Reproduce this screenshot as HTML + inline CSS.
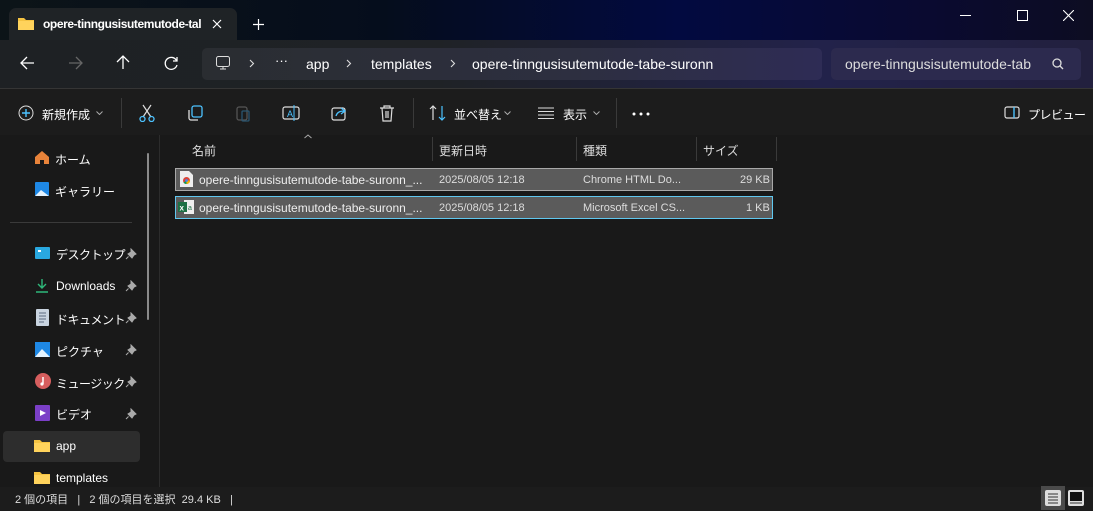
<!DOCTYPE html>
<html><head><meta charset="utf-8"><style>
*{margin:0;padding:0;box-sizing:border-box}
body{width:1093px;height:511px;overflow:hidden;background:#191919;font-family:"Liberation Sans","Noto Sans CJK JP",sans-serif;color:#fff;position:relative;font-size:12px}
.abs{position:absolute}
.title{left:0;top:0;width:1093px;height:40px;background:linear-gradient(90deg,#0c1418 0%,#050d1c 35%,#020a40 62%,#0a0a30 85%,#0d0d22 100%)}
.tab{left:9px;top:8px;width:228px;height:32px;background:#1f2326;border-radius:7px 7px 0 0}
.nav{left:0;top:40px;width:1093px;height:48px;background:linear-gradient(90deg,#1e2124 0%,#1f2226 40%,#22224a 75%,#22203e 100%)}
.addr{left:202px;top:48px;width:620px;height:32px;border-radius:5px;background:linear-gradient(90deg,#2a2d31,#2d2f40 60%,#2e2c55)}
.search{left:831px;top:48px;width:250px;height:32px;border-radius:5px;background:#2c2a4e}
.tool{left:0;top:88px;width:1093px;height:47px;background:#1c1c1c;border-top:1px solid #353535}
.t{position:absolute;white-space:nowrap}
.sep{position:absolute;width:1px;background:#3a3a3a}
.row{position:absolute;left:175px;width:598px;height:23px;background:#5b5b5b}
.side{font-size:12px;color:#fff}
.status{left:0;top:487px;width:1093px;height:24px;background:#1c1c1c}
</style></head><body>
<div class="abs title"></div>
<div class="abs tab"></div>
<svg class="abs" style="left:18px;top:17px" width="16" height="13"><path d="M0 1h6l2 2h8v10H0z" fill="#f5c342"/><rect x="0" y="4" width="16" height="9" fill="#ffd35c"/></svg>
<div class="t" style="left:43px;top:17px;font-size:12px;font-weight:bold;letter-spacing:-0.4px">opere-tinngusisutemutode-tal</div>
<svg class="abs" style="left:212px;top:19px" width="10" height="10"><path d="M1 1l8 8M9 1L1 9" stroke="#fff" stroke-width="1.2"/></svg>
<svg class="abs" style="left:253px;top:19px" width="11" height="11"><path d="M5.5 0v11M0 5.5h11" stroke="#fff" stroke-width="1.2"/></svg>
<div class="abs" style="left:960px;top:15px;width:11px;height:1px;background:#fff"></div>
<div class="abs" style="left:1017px;top:10px;width:11px;height:11px;border:1px solid #fff"></div>
<svg class="abs" style="left:1063px;top:10px" width="11" height="11"><path d="M0 0l11 11M11 0L0 11" stroke="#fff" stroke-width="1.1"/></svg>
<div class="abs nav"></div>
<svg class="abs" style="left:20px;top:56px" width="15" height="14"><path d="M14 7H1M7 1L1 7l6 6" fill="none" stroke="#fff" stroke-width="1.3"/></svg>
<svg class="abs" style="left:68px;top:56px" width="15" height="14"><path d="M1 7h13M8 1l6 6-6 6" fill="none" stroke="#666" stroke-width="1.3"/></svg>
<svg class="abs" style="left:116px;top:55px" width="14" height="15"><path d="M7 14V1M1 7l6-6 6 6" fill="none" stroke="#fff" stroke-width="1.3"/></svg>
<svg class="abs" style="left:164px;top:56px" width="15" height="15"><path d="M12.5 4.5A6 6 0 1 0 13 9" fill="none" stroke="#fff" stroke-width="1.3"/><path d="M13 1v4h-4" fill="none" stroke="#fff" stroke-width="1.3"/></svg>
<div class="abs addr"></div>
<svg class="abs" style="left:215px;top:55px" width="16" height="16"><rect x="1.5" y="1.5" width="13" height="10" rx="2" fill="none" stroke="#ddd"/><path d="M5 14h6M8 12v2" stroke="#ddd"/></svg>
<svg class="abs" style="left:249px;top:59px" width="6" height="9"><path d="M1 1l3.5 3.5L1 8" fill="none" stroke="#ddd" stroke-width="1.1"/></svg>
<div class="t" style="left:275px;top:53px;font-size:13px">···</div>
<div class="t" style="left:306px;top:56px;font-size:14px">app</div>
<svg class="abs" style="left:346px;top:59px" width="6" height="9"><path d="M1 1l3.5 3.5L1 8" fill="none" stroke="#ddd" stroke-width="1.1"/></svg>
<div class="t" style="left:371px;top:56px;font-size:14px">templates</div>
<svg class="abs" style="left:450px;top:59px" width="6" height="9"><path d="M1 1l3.5 3.5L1 8" fill="none" stroke="#ddd" stroke-width="1.1"/></svg>
<div class="t" style="left:472px;top:56px;font-size:14px">opere-tinngusisutemutode-tabe-suronn</div>
<div class="abs search"></div>
<div class="t" style="left:845px;top:56px;font-size:14px;color:#ddd">opere-tinngusisutemutode-tab</div>
<svg class="abs" style="left:1052px;top:58px" width="12" height="12"><circle cx="5" cy="5" r="4" fill="none" stroke="#ddd" stroke-width="1.3"/><path d="M8 8l3 3" stroke="#ddd" stroke-width="1.3"/></svg>
<div class="abs tool"></div>
<svg class="abs" style="left:18px;top:105px" width="16" height="16"><circle cx="8" cy="8" r="7" fill="none" stroke="#ddd"/><path d="M8 4v8M4 8h8" stroke="#4cc2ff" stroke-width="1.4"/></svg>
<div class="t" style="left:42px;top:106px;font-size:12px">新規作成</div>
<svg class="abs" style="left:96px;top:111px" width="7" height="4"><path d="M0.5 0.5l3 3 3-3" fill="none" stroke="#aaa"/></svg>
<div class="sep" style="left:121px;top:98px;height:30px"></div>
<svg class="abs" style="left:138px;top:104px" width="18" height="18"><path d="M5 1l8 12M13 1L5 13" stroke="#ddd" stroke-width="1.2"/><circle cx="4.5" cy="15" r="2.5" fill="none" stroke="#4cc2ff" stroke-width="1.3"/><circle cx="13.5" cy="15" r="2.5" fill="none" stroke="#4cc2ff" stroke-width="1.3"/></svg>
<svg class="abs" style="left:186px;top:104px" width="18" height="18"><rect x="6" y="2" width="10" height="11" rx="2" fill="none" stroke="#4cc2ff" stroke-width="1.3"/><path d="M3 6v8a2 2 0 002 2h7" fill="none" stroke="#ddd" stroke-width="1.3"/></svg>
<svg class="abs" style="left:234px;top:104px" width="18" height="18"><rect x="3" y="3" width="10" height="13" rx="2" fill="none" stroke="#555" stroke-width="1.3"/><rect x="8" y="7" width="7" height="10" rx="1" fill="none" stroke="#2a5570" stroke-width="1.3"/></svg>
<svg class="abs" style="left:282px;top:104px" width="18" height="18"><rect x="1" y="3" width="16" height="12" rx="2" fill="none" stroke="#ddd" stroke-width="1.2"/><text x="5" y="13" font-size="9" fill="#4cc2ff" font-family="Liberation Sans">A</text><path d="M12 1v16" stroke="#4cc2ff"/></svg>
<svg class="abs" style="left:330px;top:104px" width="18" height="18"><rect x="2" y="4" width="13" height="12" rx="2" fill="none" stroke="#ddd" stroke-width="1.2"/><path d="M6 12c1-4 4-5 8-5M11 4l4 3-4 3" fill="none" stroke="#4cc2ff" stroke-width="1.3"/></svg>
<svg class="abs" style="left:378px;top:104px" width="18" height="18"><path d="M2 4h14M6 4V2h6v2M4 4l1 13h8l1-13M8 7v7M10 7v7" fill="none" stroke="#ddd" stroke-width="1.2"/></svg>
<div class="sep" style="left:413px;top:98px;height:30px"></div>
<svg class="abs" style="left:429px;top:105px" width="18" height="16"><path d="M4 15V1M1 4l3-3 3 3" fill="none" stroke="#ddd" stroke-width="1.2"/><path d="M13 1v14M10 12l3 3 3-3" fill="none" stroke="#4cc2ff" stroke-width="1.2"/></svg>
<div class="t" style="left:454px;top:106px;font-size:12px">並べ替え</div>
<svg class="abs" style="left:504px;top:111px" width="7" height="4"><path d="M0.5 0.5l3 3 3-3" fill="none" stroke="#aaa"/></svg>
<svg class="abs" style="left:538px;top:107px" width="16" height="12"><path d="M0 1h16M0 4.5h16M0 8h16M0 11.5h16" stroke="#ddd"/></svg>
<div class="t" style="left:563px;top:106px;font-size:12px">表示</div>
<svg class="abs" style="left:593px;top:111px" width="7" height="4"><path d="M0.5 0.5l3 3 3-3" fill="none" stroke="#aaa"/></svg>
<div class="sep" style="left:616px;top:98px;height:30px"></div>
<svg class="abs" style="left:632px;top:112px" width="18" height="4"><circle cx="2" cy="2" r="1.5" fill="#fff"/><circle cx="9" cy="2" r="1.5" fill="#fff"/><circle cx="16" cy="2" r="1.5" fill="#fff"/></svg>
<svg class="abs" style="left:1004px;top:106px" width="16" height="13"><rect x="1" y="1" width="14" height="11" rx="2" fill="none" stroke="#ddd" stroke-width="1.2"/><path d="M10 1v11" stroke="#4cc2ff" stroke-width="1.4"/></svg>
<div class="t" style="left:1028px;top:106px;font-size:12px;letter-spacing:-0.5px">プレビュー</div>
<!-- sidebar -->
<div class="abs" style="left:147px;top:153px;width:2px;height:167px;background:#8a8a8a;border-radius:1px"></div>
<div class="abs" style="left:159px;top:135px;width:1px;height:352px;background:#2c2c2c"></div>
<svg class="abs" style="left:34px;top:150px" width="16" height="15"><path d="M8 1L1 7v7h5v-4h4v4h5V7z" fill="#e8833a"/></svg>
<div class="t side" style="left:55px;top:151px">ホーム</div>
<svg class="abs" style="left:34px;top:181px" width="16" height="16"><rect x="1" y="1" width="14" height="14" rx="1" fill="#1e88e5"/><path d="M1 15l6-6 8 6z" fill="#e3f2fd"/></svg>
<div class="t side" style="left:55px;top:183px">ギャラリー</div>
<div class="abs" style="left:10px;top:222px;width:122px;height:1px;background:#3a3a3a"></div>
<svg class="abs" style="left:34px;top:246px" width="16" height="14"><rect x="1" y="1" width="15" height="12" rx="1" fill="#29a8e0"/><rect x="4" y="4" width="3" height="2" fill="#fff"/></svg>
<div class="t side" style="left:56px;top:246px;letter-spacing:-0.5px">デスクトップ</div>
<svg class="abs" style="left:35px;top:278px" width="14" height="15"><path d="M7 1v9M3 6l4 4 4-4M1 14h12" fill="none" stroke="#2eb87a" stroke-width="1.4"/></svg>
<div class="t side" style="left:56px;top:279px">Downloads</div>
<svg class="abs" style="left:36px;top:309px" width="13" height="17"><rect x="0" y="0" width="13" height="17" rx="1" fill="#c9d4e0"/><path d="M3 4h7M3 7h7M3 10h7M3 13h5" stroke="#5a6a80"/></svg>
<div class="t side" style="left:56px;top:311px;letter-spacing:-0.5px">ドキュメント</div>
<svg class="abs" style="left:35px;top:342px" width="15" height="15"><rect width="15" height="15" fill="#1e88e5"/><path d="M0 15l7-8 8 8z" fill="#e3f2fd"/></svg>
<div class="t side" style="left:56px;top:343px">ピクチャ</div>
<svg class="abs" style="left:35px;top:373px" width="16" height="16"><circle cx="8" cy="8" r="8" fill="#d65e5e"/><path d="M8 4v7" stroke="#fff" stroke-width="1.5"/><circle cx="7" cy="11" r="1.6" fill="#fff"/></svg>
<div class="t side" style="left:56px;top:375px;letter-spacing:-0.5px">ミュージック</div>
<svg class="abs" style="left:35px;top:405px" width="15" height="16"><rect width="15" height="16" rx="1" fill="#7b3fc7"/><path d="M5 5l6 3-6 3z" fill="#fff"/></svg>
<div class="t side" style="left:56px;top:406px">ビデオ</div>
<svg class="abs" style="left:125px;top:248px" width="12" height="12"><path d="M6 1l5 5-2 1-2 3-4-4 3-2zM3.5 8.5L1 11" fill="#aaa" stroke="#aaa" stroke-width="1"/></svg>
<svg class="abs" style="left:125px;top:280px" width="12" height="12"><path d="M6 1l5 5-2 1-2 3-4-4 3-2zM3.5 8.5L1 11" fill="#aaa" stroke="#aaa" stroke-width="1"/></svg>
<svg class="abs" style="left:125px;top:312px" width="12" height="12"><path d="M6 1l5 5-2 1-2 3-4-4 3-2zM3.5 8.5L1 11" fill="#aaa" stroke="#aaa" stroke-width="1"/></svg>
<svg class="abs" style="left:125px;top:344px" width="12" height="12"><path d="M6 1l5 5-2 1-2 3-4-4 3-2zM3.5 8.5L1 11" fill="#aaa" stroke="#aaa" stroke-width="1"/></svg>
<svg class="abs" style="left:125px;top:376px" width="12" height="12"><path d="M6 1l5 5-2 1-2 3-4-4 3-2zM3.5 8.5L1 11" fill="#aaa" stroke="#aaa" stroke-width="1"/></svg>
<svg class="abs" style="left:125px;top:408px" width="12" height="12"><path d="M6 1l5 5-2 1-2 3-4-4 3-2zM3.5 8.5L1 11" fill="#aaa" stroke="#aaa" stroke-width="1"/></svg>
<div class="abs" style="left:3px;top:431px;width:137px;height:31px;background:#2d2d2d;border-radius:4px"></div>
<svg class="abs" style="left:34px;top:439px" width="16" height="13"><path d="M0 1h6l2 2h8v10H0z" fill="#f5c342"/><rect x="0" y="4" width="16" height="9" fill="#ffd35c"/></svg>
<div class="t side" style="left:56px;top:439px">app</div>
<svg class="abs" style="left:34px;top:471px" width="16" height="13"><path d="M0 1h6l2 2h8v10H0z" fill="#f5c342"/><rect x="0" y="4" width="16" height="9" fill="#ffd35c"/></svg>
<div class="t side" style="left:56px;top:471px">templates</div>
<!-- header -->
<svg class="abs" style="left:304px;top:134px" width="8" height="5"><path d="M0.5 4l3.5-3 3.5 3" fill="none" stroke="#aaa"/></svg>
<div class="t" style="left:192px;top:142px;font-size:12px;color:#ddd">名前</div>
<div class="sep" style="left:432px;top:137px;height:24px"></div>
<div class="t" style="left:439px;top:142px;font-size:12px;color:#ddd">更新日時</div>
<div class="sep" style="left:576px;top:137px;height:24px"></div>
<div class="t" style="left:583px;top:142px;font-size:12px;color:#ddd">種類</div>
<div class="sep" style="left:696px;top:137px;height:24px"></div>
<div class="t" style="left:703px;top:142px;font-size:12px;color:#ddd">サイズ</div>
<div class="sep" style="left:776px;top:137px;height:24px"></div>
<div class="row" style="top:168px;border:1px solid #a8a8a8"></div>
<div class="row" style="top:196px;border:1px solid #60c8f0"></div>
<svg class="abs" style="left:180px;top:171px" width="13" height="16"><path d="M0 0h9l4 4v12H0z" fill="#eee"/><circle cx="6.5" cy="9.5" r="3.5" fill="#db4437"/><path d="M6.5 9.5L3.5 11.5A3.5 3.5 0 006.5 13z" fill="#0f9d58"/><path d="M6.5 9.5h3.5a3.5 3.5 0 01-3.5 3.5z" fill="#f4b400"/><circle cx="6.5" cy="9.5" r="1.4" fill="#4285f4"/></svg>
<svg class="abs" style="left:178px;top:199px" width="17" height="16"><rect x="6" y="1" width="10" height="14" fill="#eee"/><rect x="0" y="3" width="9" height="10" fill="#1d7044"/><text x="1.5" y="11.5" font-size="8" fill="#fff" font-family="Liberation Sans" font-weight="bold">x</text><text x="10" y="11" font-size="7" fill="#1d7044" font-family="Liberation Sans">a</text></svg>
<div class="t" style="left:199px;top:173px;font-size:12px;color:#eee">opere-tinngusisutemutode-tabe-suronn_...</div>
<div class="t" style="left:439px;top:174px;font-size:11px;color:#ddd">2025/08/05 12:18</div>
<div class="t" style="left:583px;top:174px;font-size:11px;color:#ddd">Chrome HTML Do...</div>
<div class="t" style="left:740px;top:174px;font-size:11px;color:#ddd">29 KB</div>
<div class="t" style="left:199px;top:201px;font-size:12px;color:#eee">opere-tinngusisutemutode-tabe-suronn_...</div>
<div class="t" style="left:439px;top:202px;font-size:11px;color:#ddd">2025/08/05 12:18</div>
<div class="t" style="left:583px;top:202px;font-size:11px;color:#ddd">Microsoft Excel CS...</div>
<div class="t" style="left:746px;top:202px;font-size:11px;color:#ddd">1 KB</div>
<!-- status -->
<div class="abs status"></div>
<div class="t" style="left:15px;top:491px;font-size:11px;color:#ddd">2 個の項目 &nbsp;&nbsp;|&nbsp;&nbsp; 2 個の項目を選択 &nbsp;29.4 KB &nbsp;&nbsp;|</div>
<div class="abs" style="left:1041px;top:486px;width:24px;height:24px;background:#4a4a4a"></div>
<svg class="abs" style="left:1045px;top:490px" width="16" height="16"><rect width="16" height="16" rx="2" fill="#ddd"/><path d="M3 4h10M3 7h10M3 10h10M3 13h10" stroke="#333"/></svg>
<svg class="abs" style="left:1068px;top:490px" width="16" height="16"><rect width="16" height="16" rx="2" fill="#ddd"/><rect x="2" y="2" width="12" height="9" fill="#111"/><path d="M2 13h12" stroke="#333"/></svg>
</body></html>
